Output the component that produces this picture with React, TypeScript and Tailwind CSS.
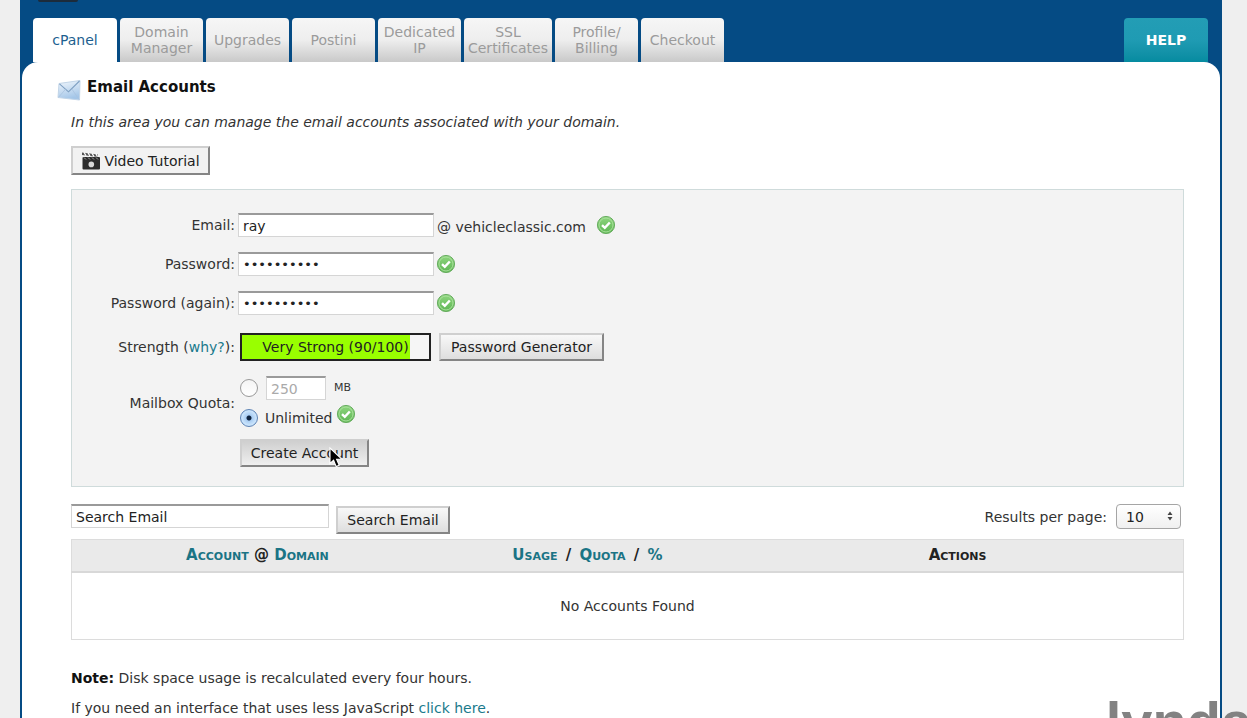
import { useState } from "react";
import type { ReactNode } from "react";

const tabs = ["Domain Manager", "Upgrades", "Postini", "Dedicated IP", "SSL Certificates", "Profile/ Billing", "Checkout"];

const bevel =
  "relative flex items-center justify-center border-2 border-t-[#cfcfcf] border-l-[#cfcfcf] border-r-[#858585] border-b-[#858585] text-sm leading-4 text-[#222]";
const field =
  "h-6 border border-[#d5d5d5] border-t-2 border-t-[#9a9a9a] bg-white px-1 text-[#222] outline-none";
const radio =
  "size-[18px] shrink-0 appearance-none rounded-full border border-[#999] bg-linear-to-b from-[#f4f4f4] to-white checked:border-[#5d83b5] checked:bg-[radial-gradient(circle,#10243f_0_2px,#a9cdf3_3px,#c9e3fb_7px)]";

function CheckIcon() {
  return (
    <svg viewBox="0 0 20 20" className="size-5 shrink-0" aria-hidden="true">
      <defs>
        <linearGradient id="ok" x1="0" y1="0" x2="0" y2="1">
          <stop offset="0" stopColor="#8fd67f" />
          <stop offset="1" stopColor="#5cb552" />
        </linearGradient>
      </defs>
      <circle cx="10" cy="10" r="8.6" fill="url(#ok)" stroke="#6aae62" strokeWidth="1" />
      <circle cx="10" cy="10" r="7" fill="none" stroke="#a9e09c" strokeWidth="1" />
      <path d="M6 10.2l2.8 2.7 5-5.4" fill="none" stroke="#fff" strokeWidth="2.4" />
    </svg>
  );
}

function EnvelopeIcon() {
  return (
    <svg viewBox="0 0 24 22" className="h-[22px] w-6" aria-hidden="true">
      <defs>
        <linearGradient id="env" x1="0" y1="0" x2="0.3" y2="1">
          <stop offset="0" stopColor="#f3f8fd" />
          <stop offset="1" stopColor="#a4c6e8" />
        </linearGradient>
      </defs>
      <path d="M2 4.5L23 1.5 22.5 21 1 18.5z" fill="url(#env)" stroke="#c2d5e8" />
      <path d="M2.5 4.8l9 8L22.5 2" fill="none" stroke="#7e9fc2" strokeWidth="1.1" />
      <path d="M1.5 18.3l7-8M22 20.5l-7-10.3" fill="none" stroke="#a9c3de" strokeWidth="0.8" />
    </svg>
  );
}

function ClapperIcon() {
  return (
    <svg viewBox="0 0 20 19" className="h-[19px] w-5" aria-hidden="true">
      <path d="M1 1.5l16 2v2.6l-16-2z" fill="#555" />
      <path d="M3 1.2l2 3.6M7 1.7l2 3.6M11 2.2l2 3.6M15 2.7l1.5 3" stroke="#fff" strokeWidth="1.3" />
      <rect x="1.5" y="6" width="17.5" height="12.5" rx="1" fill="#2c2c2c" />
      <path d="M3 6.5l2 2M7 6.5l2 2M11 6.5l2 2M15 6.5l2 2" stroke="#a5a5a5" strokeWidth="1" />
      <circle cx="10.3" cy="13.4" r="2.8" fill="#d8d8d8" />
    </svg>
  );
}

function Row({ label, htmlFor, className, children }: { label: ReactNode; htmlFor?: string; className: string; children: ReactNode }) {
  return (
    <div className={`flex items-center ${className}`}>
      <label htmlFor={htmlFor} className="w-[163px] shrink-0 text-right">{label}</label>
      {children}
    </div>
  );
}

export default function App() {
  const [quota, setQuota] = useState("unlimited");
  return (
    <div className="relative h-screen overflow-hidden bg-[#efefef] px-5 pr-[25px] font-['DejaVu_Sans',Verdana,sans-serif] text-sm text-[#333]">
      <div className="flex min-h-full flex-col bg-[#054b84] px-0.5">
        <header className="flex h-[62px] flex-col justify-between">
          <div className="ml-4 h-0.5 w-10 rounded-b-sm bg-[#1c2b3b]" />
          <nav className="flex h-11 items-stretch gap-[3px] pr-3 pl-[11px] leading-4">
            <a href="#cpanel" className="flex w-[84px] items-center justify-center rounded-t bg-white text-[#1d5f8f]">cPanel</a>
            {tabs.map((tab) => (
              <a
                key={tab}
                href="#tab"
                className={`flex items-center justify-center rounded-t bg-linear-to-b from-[#f6f6f6] via-[#eeeeee] to-[#c9c9c9] text-center text-[#9b9b9b] ${tab === "SSL Certificates" ? "w-[88px]" : "w-[83px]"}`}
              >
                {tab}
              </a>
            ))}
            <a href="#help" className="ml-auto flex w-[84px] items-center justify-center rounded-t bg-linear-to-b from-[#239db5] via-[#1f9bb3] to-[#058ba0] font-bold text-white">HELP</a>
          </nav>
        </header>

        <main className="flex-1 rounded-t-2xl bg-white pt-[14px] pr-[36px] pl-[49px]">
          <h1 className="-ml-[14px] flex h-[26px] items-center gap-[6px] text-[15px] leading-6 font-bold text-[#111]">
            <span className="pt-0.5"><EnvelopeIcon /></span>
            <span className="pb-1">Email Accounts</span>
          </h1>
          <p className="mt-[10px] italic">In this area you can manage the email accounts associated with your domain.</p>
          <button type="button" className={`${bevel} mt-[14px] h-[29px] w-[139px] gap-[3px] bg-[#f2f2f2]`}>
            <ClapperIcon />
            Video Tutorial
          </button>

          <form className="mt-[14px] border border-[#cfdbdb] bg-[#f3f3f3] pt-[23px] pb-[19px]" onSubmit={(e) => e.preventDefault()}>
            <Row label="Email:" htmlFor="email" className="h-6">
              <input id="email" defaultValue="ray" className={`${field} ml-[3px] w-[196px] text-sm`} />
              <span className="mt-1 ml-[3px]">@ vehicleclassic.com</span>
              <span className="ml-[10px]"><CheckIcon /></span>
            </Row>
            <Row label="Password:" htmlFor="pw" className="mt-[15px] h-6">
              <input id="pw" type="password" defaultValue="classic190" className={`${field} mr-[2px] ml-[3px] w-[196px] text-[13px]`} />
              <CheckIcon />
            </Row>
            <Row label="Password (again):" htmlFor="pw2" className="mt-[15px] h-6">
              <input id="pw2" type="password" defaultValue="classic190" className={`${field} mr-[2px] ml-[3px] w-[196px] text-[13px]`} />
              <CheckIcon />
            </Row>
            <Row label={<>Strength (<a href="#why" className="text-[#1a7a8c]">why?</a>):</>} className="mt-[18px] h-7">
              <div className="ml-[5px] flex h-7 w-[191px] items-center justify-center border-2 border-[#222] bg-linear-to-r from-[#99ff00] from-90% to-[#f6f6f6] to-90% text-[#222]">
                Very Strong (90/100)
              </div>
              <button type="button" className={`${bevel} ml-2 h-7 w-[165px] bg-linear-to-b from-[#f8f8f8] to-[#dedede]`}>Password Generator</button>
            </Row>
            <Row label="Mailbox Quota:" className="mt-[14px] h-14">
              <div className="ml-[5px] flex flex-col gap-1">
                <div className="flex h-[26px] items-center">
                  <input type="radio" name="quota" aria-label="Limited" checked={quota === "limited"} onChange={() => setQuota("limited")} className={radio} />
                  <input aria-label="Quota size" defaultValue="250" className="ml-2 h-6 w-[60px] border border-t-2 border-[#d5d5d5] border-t-[#9a9a9a] bg-white px-1 text-sm text-[#aaa] outline-none" />
                  <span className="ml-2 text-[11px]">MB</span>
                </div>
                <div className="flex h-[26px] items-center">
                  <input id="unl" type="radio" name="quota" checked={quota === "unlimited"} onChange={() => setQuota("unlimited")} className={radio} />
                  <label htmlFor="unl" className="mr-1 ml-[7px]">Unlimited</label>
                  <span className="pb-2"><CheckIcon /></span>
                </div>
              </div>
            </Row>
            <div className="mt-2 ml-[168px] flex">
              <button type="submit" className={`${bevel} h-7 w-[129px] bg-linear-to-b from-[#cfcfcf] to-[#efefef]`}>
                Create Account
                <svg viewBox="0 0 14 22" className="absolute top-1.5 left-[87px] h-[22px] w-3.5" aria-hidden="true">
                  <path d="M1 1v15.5l3.6-3.2 2.6 6.3 3-1.3-2.6-6H13z" fill="#000" stroke="#fff" strokeWidth="1.1" />
                </svg>
              </button>
            </div>
          </form>

          <div className="mt-[17px] flex items-start">
            <input aria-label="Search Email" defaultValue="Search Email" className={`${field} w-[258px] text-sm`} />
            <button type="button" className={`${bevel} mt-0.5 ml-[7px] h-7 w-[114px] bg-linear-to-b from-[#f8f8f8] to-[#dedede]`}>Search Email</button>
            <div className="mr-[3px] ml-auto flex items-center gap-[9px]">
              <label htmlFor="perpage">Results per page:</label>
              <div className="relative">
                <select id="perpage" className="block h-[25px] w-[65px] appearance-none rounded border border-[#a5a5a5] bg-linear-to-b from-white to-[#f0f0f0] pl-[9px] text-sm text-[#222]">
                  <option>10</option>
                </select>
                <svg viewBox="0 0 6 10" className="pointer-events-none absolute top-[7px] right-2 h-2.5 w-1.5" aria-hidden="true">
                  <path d="M0.5 4L3 0.5 5.5 4zM0.5 6L3 9.5 5.5 6z" fill="#444" />
                </svg>
              </div>
            </div>
          </div>

          <table className="mt-[5px] w-full table-fixed border-collapse border border-[#dcdcdc]">
            <thead>
              <tr className="h-8 border-b-2 border-[#d8d8d8] bg-[#eaeaea] text-[15px] text-[#222] [font-variant:small-caps]">
                <th className="w-[33.4%] p-0"><a href="#account" className="text-[#1a7485]">Account</a> @ <a href="#domain" className="text-[#1a7485]">Domain</a></th>
                <th className="w-[26%] p-0">
                  <a href="#usage" className="text-[#1a7485]">Usage</a> <span className="px-[3px]">/</span> <a href="#quota" className="text-[#1a7485]">Quota</a> <span className="px-[3px]">/</span> <a href="#percent" className="text-[#1a7485]">%</a>
                </th>
                <th className="p-0">Actions</th>
              </tr>
            </thead>
            <tbody>
              <tr className="h-[68px]">
                <td colSpan={3} className="p-0 text-center">No Accounts Found</td>
              </tr>
            </tbody>
          </table>

          <p className="mt-7"><b className="text-[#111]">Note:</b> Disk space usage is recalculated every four hours.</p>
          <p className="mt-[10px]">If you need an interface that uses less JavaScript <a href="#simple" className="text-[#1a7a8c]">click here</a>.</p>
        </main>
      </div>
      <div className="absolute -right-[5px] -bottom-[36px] font-['Liberation_Sans',Arial,sans-serif] text-[56px] leading-[64px] font-bold text-[#828282]">lynda</div>
    </div>
  );
}
